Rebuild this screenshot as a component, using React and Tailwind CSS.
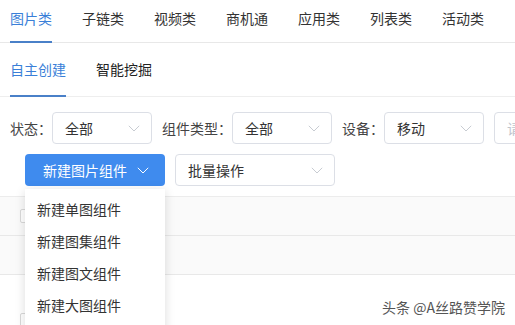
import { useState } from "react";

const TABS = ["图片类", "子链类", "视频类", "商机通", "应用类", "列表类", "活动类"];
const SUB_TABS = ["自主创建", "智能挖掘"];
const MENU = ["新建单图组件", "新建图集组件", "新建图文组件", "新建大图组件"];

function Chevron({ className = "" }) {
  return (
    <svg viewBox="0 0 12 7" className={`h-[7px] w-[12px] ${className}`} fill="none">
      <path d="M0.8 0.8 L6 6 L11.2 0.8" stroke="currentColor" strokeWidth="1" />
    </svg>
  );
}

function Select({ value, width, placeholder }) {
  return (
    <div
      className="relative flex h-[32px] shrink-0 items-center rounded-[4px] border border-[#dcdfe6] bg-white pl-[12px]"
      style={{ width }}
    >
      <span className={placeholder ? "text-[#c0c4cc]" : "text-[#333]"}>{value}</span>
      {!placeholder && <Chevron className="absolute right-[11px] top-[12px] text-[#c8ccd2]" />}
    </div>
  );
}

export default function App() {
  const [tab, setTab] = useState(0);
  const [sub, setSub] = useState(0);

  return (
    <div
      className="relative h-[325px] w-[515px] overflow-hidden bg-white text-[14px] leading-[20px] text-[#333]"
      style={{ fontFamily: '"Noto Sans CJK SC", "Noto Sans", sans-serif' }}
    >
      {/* top tabs */}
      <div className="flex h-[43px] gap-[30px] border-b border-[#e8e8e8] px-[10px] pt-[8px]">
        {TABS.map((t, i) => (
          <div key={t} className="relative w-[42px] shrink-0 cursor-pointer" onClick={() => setTab(i)}>
            <span className={i === tab ? "text-[#3a7fd8]" : ""}>{t}</span>
            {i === tab && <div className="absolute bottom-[-1px] left-0 h-[2px] w-full bg-[#4a80c8]" />}
          </div>
        ))}
      </div>

      {/* sub tabs */}
      <div className="flex h-[54px] gap-[30px] border-b border-[#eeeeee] px-[10px] pt-[16px]">
        {SUB_TABS.map((t, i) => (
          <div key={t} className="relative w-[56px] shrink-0 cursor-pointer" onClick={() => setSub(i)}>
            <span className={i === sub ? "text-[#3a7fd8]" : "text-[#222]"}>{t}</span>
            {i === sub && <div className="absolute bottom-[-1px] left-0 h-[2px] w-full bg-[#4a80c8]" />}
          </div>
        ))}
      </div>

      {/* filters */}
      <div className="mt-[15px] flex items-center pl-[10px] text-[#444]">
        <span className="w-[42px] shrink-0">状态：</span>
        <Select value="全部" width={100} />
        <span className="ml-[10px] w-[70px] shrink-0">组件类型：</span>
        <Select value="全部" width={100} />
        <span className="ml-[10px] w-[42px] shrink-0">设备：</span>
        <Select value="移动" width={100} />
        <div className="ml-[10px]">
          <Select value="请输入" width={120} placeholder />
        </div>
      </div>

      {/* actions */}
      <div className="relative mt-[10px] flex items-center gap-[10px] pl-[25px]">
        <button className="flex h-[32px] w-[140px] items-center gap-[10px] rounded-[4px] bg-[#3f8bee] pl-[18px] text-white">
          <span>新建图片组件</span>
          <Chevron className="text-white" />
        </button>
        <Select value="批量操作" width={160} />

        <div className="absolute left-[25px] top-[35px] z-10 w-[140px] bg-white pb-[12px] pt-[4px] shadow-[0_2px_10px_rgba(0,0,0,0.14)]">
          {MENU.map((m) => (
            <div key={m} className="flex h-[32px] items-center pl-[12px] text-[#333]">
              {m}
            </div>
          ))}
        </div>
      </div>

      {/* table */}
      <div className="mt-[10px] border-t border-[#ececec]">
        <div className="flex h-[39px] items-center border-b border-[#e8e8e8] bg-[#fafafa] pl-[20px]">
          <div className="h-[14px] w-[14px] rounded-[2px] border border-[#d9d9d9] bg-white" />
        </div>
        <div className="h-[39px] border-b border-[#e8e8e8] bg-[#fafafa]" />
        <div className="flex h-[80px] items-start pl-[20px] pt-[38px]">
          <div className="h-[14px] w-[14px] rounded-[2px] border border-[#d9d9d9] bg-white" />
        </div>
      </div>

      {/* watermark */}
      <div
        className="absolute bottom-[8px] right-[10px] text-[14px] text-[#555]"
        style={{ textShadow: "0 0 2px #fff, 0 0 2px #fff" }}
      >
        头条 @A丝路赞学院
      </div>
    </div>
  );
}
